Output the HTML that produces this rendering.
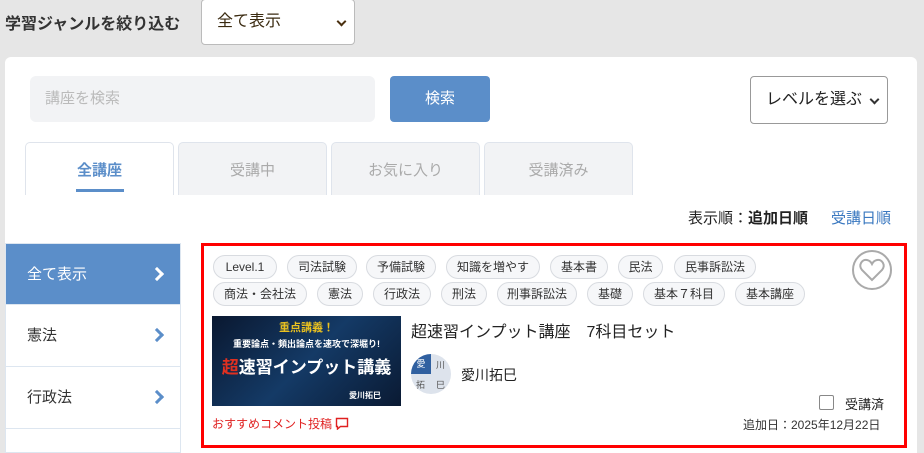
<!DOCTYPE html>
<html style="width:924px;height:453px;overflow:hidden"><head><meta charset="utf-8"><style>
*{box-sizing:border-box;margin:0;padding:0}
body{width:924px;height:453px;overflow:hidden;background:#e6e6e6;font-family:"Liberation Sans","Noto Sans CJK JP",sans-serif;position:relative;color:#333}
.a{position:absolute}
.panel{left:5px;top:57px;width:912px;height:396px;background:#fff;border-radius:6px 6px 0 0}
.tag{position:absolute;height:24px;border:1px solid #d8dbe0;background:#f6f7f9;border-radius:12px;font-size:12px;line-height:22px;text-align:center;color:#333}
.tab{position:absolute;top:142px;width:149px;height:53px;border:1px solid #dfe4ec;border-bottom:none;border-radius:5px 5px 0 0;background:#f2f3f5;color:#aaa;font-size:15px;text-align:center;line-height:56px}
.side{position:absolute;left:5px;width:176px;height:62px;border:1px solid #dde6f0;border-top:none;font-size:15px;line-height:62px;padding-left:21px;background:#fff}
.chev{position:absolute;right:18px;top:25px;width:10px;height:10px;border-right:3px solid #5b8ec9;border-top:3px solid #5b8ec9;transform:rotate(45deg)}
.dd{position:absolute;right:9px;top:18px;width:7px;height:7px;border-right:2px solid #333;border-bottom:2px solid #333;transform:rotate(45deg)}
</style></head><body>
<div class="a" style="left:5px;top:10px;font-size:16px;font-weight:bold;color:#333">学習ジャンルを絞り込む</div>
<div class="a" style="left:201px;top:-1px;width:154px;height:46px;background:#fff;border:1px solid #bbb;border-radius:4px;font-size:16px;line-height:44px;padding-left:15px;color:#3a2a10">全て表示<div class="dd" style="border-color:#4a3010"></div></div>
<div class="a panel"></div>
<div class="a" style="left:30px;top:76px;width:345px;height:46px;background:#f2f3f5;border-radius:6px;font-size:15px;line-height:46px;padding-left:15px;color:#bbb">講座を検索</div>
<div class="a" style="left:390px;top:76px;width:100px;height:46px;background:#5b8ec9;border-radius:4px;color:#fff;font-size:15px;line-height:46px;text-align:center">検索</div>
<div class="a" style="left:750px;top:76px;width:138px;height:48px;background:#fff;border:1px solid #999;border-radius:4px;font-size:16px;line-height:46px;padding-left:15px;color:#222">レベルを選ぶ<div class="dd" style="top:19px"></div></div>
<div class="tab" style="left:25px;background:#fff;color:#5b8ec9;font-weight:bold">全講座<div style="position:absolute;left:50px;top:46px;width:48px;height:3px;background:#5b8ec9"></div></div>
<div class="tab" style="left:178px">受講中</div>
<div class="tab" style="left:331px">お気に入り</div>
<div class="tab" style="left:484px">受講済み</div>
<div class="a" style="left:688px;top:207px;font-size:15px;color:#222">表示順：<b>追加日順</b></div>
<div class="a" style="left:831px;top:207px;font-size:15px;color:#3a78c0">受講日順</div>
<div class="side" style="top:243px;border-top:1px solid #dde6f0;background:#5b8ec9;color:#fff">全て表示<div class="chev" style="border-color:#fff"></div></div>
<div class="side" style="top:305px">憲法<div class="chev"></div></div>
<div class="side" style="top:367px">行政法<div class="chev"></div></div>
<div class="side" style="top:429px;height:24px"></div>
<div class="a" style="left:201px;top:243px;width:706px;height:205px;border:3px solid #f00;background:#fff"></div>
<div class="tag" style="left:213px;top:255px;width:64px">Level.1</div>
<div class="tag" style="left:287px;top:255px;width:70px">司法試験</div>
<div class="tag" style="left:366px;top:255px;width:70px">予備試験</div>
<div class="tag" style="left:446px;top:255px;width:94px">知識を増やす</div>
<div class="tag" style="left:550px;top:255px;width:58px">基本書</div>
<div class="tag" style="left:618px;top:255px;width:45px">民法</div>
<div class="tag" style="left:674px;top:255px;width:82px">民事訴訟法</div>
<div class="tag" style="left:213px;top:282px;width:94px">商法・会社法</div>
<div class="tag" style="left:317px;top:282px;width:46px">憲法</div>
<div class="tag" style="left:373px;top:282px;width:58px">行政法</div>
<div class="tag" style="left:441px;top:282px;width:46px">刑法</div>
<div class="tag" style="left:497px;top:282px;width:80px">刑事訴訟法</div>
<div class="tag" style="left:587px;top:282px;width:46px">基礎</div>
<div class="tag" style="left:643px;top:282px;width:82px">基本７科目</div>
<div class="tag" style="left:735px;top:282px;width:70px">基本講座</div>
<div class="a" style="left:852px;top:250px;width:40px;height:40px;border:2px solid #aaa;border-radius:50%"><svg width="36" height="36" viewBox="0 0 36 36"><path d="M18 28 L8 18 C4 13 8 7 13 8 C15.5 8.5 17 10 18 12 C19 10 20.5 8.5 23 8 C28 7 32 13 28 18 Z" fill="none" stroke="#aaa" stroke-width="2"/></svg></div>
<div class="a" style="left:212px;top:316px;width:189px;height:90px;background:linear-gradient(135deg,#0a1830,#143a66 50%,#0a1a33);overflow:hidden;text-align:center;font-weight:bold">
<div style="color:#e8c020;font-size:11px;margin-top:3px">重点講義！</div>
<div style="color:#fff;font-size:9px;margin-top:2px">重要論点・頻出論点を速攻で深堀り!</div>
<div style="color:#fff;font-size:17px;margin-top:3px"><span style="color:#e03020">超</span>速習インプット講義</div>
<div style="color:#fff;font-size:8px;text-align:right;padding-right:20px;margin-top:12px">愛川拓巳</div></div>
<div class="a" style="left:411px;top:318px;font-size:16px;color:#222">超速習インプット講座　7科目セット</div>
<div class="a" style="left:411px;top:354px;width:40px;height:40px;border-radius:50%;background:#dde3ec;overflow:hidden;font-size:9px;color:#555"><div style="position:absolute;left:0;top:0;width:20px;height:20px;background:#3060a0;color:#fff;text-align:center;line-height:20px">愛</div><span style="position:absolute;left:25px;top:4px">川</span><span style="position:absolute;left:5px;top:24px">拓</span><span style="position:absolute;left:25px;top:24px">巳</span></div>
<div class="a" style="left:461px;top:365px;font-size:14px;color:#222">愛川拓巳</div>
<div class="a" style="left:212px;top:415px;font-size:12px;color:#e02020">おすすめコメント投稿 <svg width="14" height="13" viewBox="0 0 14 13" style="vertical-align:-2px"><path d="M1.5 1.5h11v8h-7l-3 2.5v-2.5h-1z" fill="none" stroke="#e02020" stroke-width="1.4"/></svg></div>
<div class="a" style="left:819px;top:395px;width:15px;height:15px;border:1px solid #888;border-radius:2px"></div>
<div class="a" style="left:845px;top:394px;font-size:13px;color:#222">受講済</div>
<div class="a" style="left:743px;top:416px;font-size:12px;color:#333">追加日：2025年12月22日</div>
</body></html>
